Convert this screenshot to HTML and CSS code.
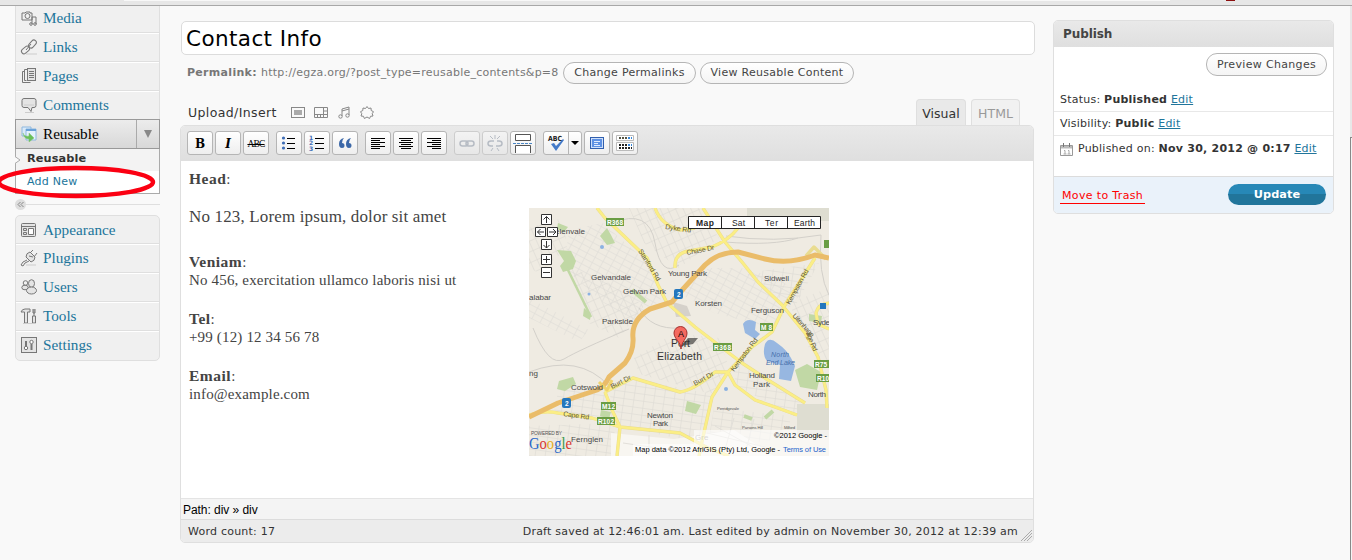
FILE: index.html
```
<!DOCTYPE html>
<html lang="en">
<head>
<meta charset="utf-8">
<title>Contact Info</title>
<link rel="stylesheet" href="styles.css">
</head>
<body>
<div class="topbar"><span class="topbar-tab"></span><span class="topbar-dot"></span></div>
<div class="page">
  <nav class="sidebar">
    <ul class="menu menu-top">
      <li><svg class="mi" viewBox="0 0 16 16"><path d="M1 3h3l1-1h4v1h2v7H1zM11 7h4v7M11 7v7"/><circle cx="6.500" cy="6" r="2.500"/><circle cx="10" cy="14" r="1.300"/><circle cx="14" cy="14" r="1.300"/></svg><a>Media</a></li>
      <li><svg class="mi" viewBox="0 0 16 16"><path class="soft" d="M5 15h11"/><rect x="7" y="2.500" width="9" height="5" rx="2.500" transform="rotate(-48 11.500 5)"/><rect x="0" y="8.500" width="9" height="5" rx="2.500" transform="rotate(-40 4.500 11)"/><path d="M5 11l5-6"/></svg><a>Links</a></li>
      <li><svg class="mi" viewBox="0 0 16 16"><path d="M4 3.500H1.500v11h8M6 1.500H3.500v11h2"/><rect class="fill" x="6.500" y=".5" width="8" height="12"/><path d="M8 3.500h5M8 5.500h5M8 7.500h5M8 9.500h5"/></svg><a>Pages</a></li>
      <li><svg class="mi" viewBox="0 0 16 16"><path class="soft" d="M4 15.500h9"/><path class="fill" d="M3 1.500h10q2 0 2 2v5q0 2-2 2h-2l-1 4-3-4H3q-2 0-2-2v-5q0-2 2-2z"/><path class="soft" d="M3 8h10"/></svg><a>Comments</a></li>
    </ul>
    <div class="current"><svg class="mi" viewBox="0 0 16 16"><path d="M1 1h9v9H1z" fill="#d9eaf9" stroke="#8fb8df"/><path d="M5 3h10v11H5z" fill="#e4f1fc" stroke="#8fb8df"/><path d="M5 4h10" stroke="#6aa2d9" stroke-width="2"/><path d="M2 7q1 4 6 3V7l5 5-5 4v-3q-5 0-6-6z" fill="#6abf59" stroke="#82c675" stroke-width=".5"/></svg><a>Reusable</a><span class="toggle"><i></i></span></div>
    <div class="submenu"><svg class="notch" viewBox="0 0 6 8"><path d="M0 .5L5 4 0 7.500" fill="#f9f9f9" stroke="#aaa"/></svg><div class="sub-on">Reusable</div><div class="sub-link">Add New</div></div>
    <div class="collapse"><svg viewBox="0 0 11 11"><circle cx="5.500" cy="5.500" r="5.500" fill="#dedede"/><path d="M5.500 3L3 5.500 5.500 8M8.500 3L6 5.500 8.500 8" fill="none" stroke="#888"/></svg><span></span></div>
    <ul class="menu menu-bottom">
      <li><svg class="mi" viewBox="0 0 16 16"><rect class="fill" x=".5" y="1.500" width="14" height="13" rx="1"/><path d="M1 4.500h13M2.500 6.500h3v2h-3zM2.500 10.500h3v2h-3z"/><path d="M7.500 6.500h5v6h-5z" fill="#fff"/></svg><a>Appearance</a></li>
      <li><svg class="mi" viewBox="0 0 16 16"><path class="soft" d="M5 15h10"/><path class="fill" d="M5 7l5 5q4-1 4-5L9 2Q5 3 5 7z" /><path d="M9 3l3-3M13 7l3-4M8 6l4 1M6 10l-4 2-2 3 2 1 2-3 4-2"/></svg><a>Plugins</a></li>
      <li><svg class="mi" viewBox="0 0 16 16"><circle cx="4.500" cy="4" r="2.300"/><ellipse class="fill" cx="4" cy="8.500" rx="3.200" ry="2.300"/><ellipse class="fill" cx="10.500" cy="4.500" rx="3" ry="3.800"/><ellipse class="fill" cx="10.500" cy="11.500" rx="5" ry="3.500"/></svg><a>Users</a></li>
      <li><svg class="mi" viewBox="0 0 16 16"><path class="fill" d="M0 4q1-3 4-3h5v3H6.500v11h-3V4zM13 1v7M11.500 8h3v7h-3z"/><path class="soft" d="M2 15.500h12"/><path d="M12 1v4h2V1"/></svg><a>Tools</a></li>
      <li><svg class="mi" viewBox="0 0 16 16"><rect class="fill" x=".5" y=".5" width="15" height="15"/><path d="M5 4v6M10.500 7v6" stroke-width="2"/><circle cx="5" cy="11" r="1.700" fill="#fff"/><circle cx="10.500" cy="5" r="1.700" fill="#fff"/></svg><a>Settings</a></li>
    </ul>
    <svg class="ring" viewBox="0 0 160 34"><ellipse cx="77" cy="17" rx="77" ry="14" fill="none" stroke="#fb0012" stroke-width="4.500"/></svg>
  </nav>

  <main class="editor">
    <div class="title">Contact Info</div>
    <div class="permalink"><b>Permalink:</b><span class="url">http://egza.org/?post_type=reusable_contents&amp;p=8</span><span class="pill p1">Change Permalinks</span><span class="pill p2">View Reusable Content</span></div>
    <div class="media-row">
      <span class="upload">Upload/Insert</span>
      <svg class="up" viewBox="0 0 14 13"><rect x=".5" y="1.500" width="13" height="10"/><rect x="3" y="4" width="8" height="5" fill="#aaa" stroke="none"/></svg>
      <svg class="up" viewBox="0 0 14 13"><path d="M.5 1.500h13v10H.5zM.5 8.500h13M9.500 1.500v7M9.500 5h4M3.500 8.500v3M6.500 8.500v3M9.500 8.500v3"/></svg>
      <svg class="up" viewBox="0 0 14 13"><path d="M5 10V3l7-2v8M5 5l7-2"/><circle cx="3.500" cy="10.500" r="1.700"/><circle cx="10.500" cy="9.500" r="1.700"/></svg>
      <svg class="up" viewBox="0 0 14 13"><path d="M7 .5l1.500 2 2.500-.5.200 2.500 2.300 1.200-1.300 2 .8 2.300-2.500.3-.9 2.200L7 11l-2.600 1.500-.9-2.200L1 10l.8-2.300-1.300-2 2.300-1.200L3 2l2.500.5z"/></svg>
      <span class="tab tab-on">Visual</span><span class="tab tab-off">HTML</span>
    </div>
    <div class="box">
      <div class="toolbar">
        <span class="tb serif"><b>B</b></span><span class="tb serif"><b><i>I</i></b></span><span class="tb abc"><s>ABC</s></span>
        <span class="gap"></span>
        <span class="tb"><svg viewBox="0 0 20 20"><g fill="#3d6cb5"><circle cx="4.500" cy="5" r="1.600"/><circle cx="4.500" cy="10" r="1.600"/><circle cx="4.500" cy="15" r="1.600"/></g><path d="M8 5.500h8M8 10.500h8M8 15.500h8" stroke="#000"/></svg></span>
        <span class="tb"><svg viewBox="0 0 20 20"><g fill="#3d6cb5" font-family="DejaVu Sans" font-weight="bold" font-size="6"><text x="2" y="6.500">1</text><text x="2" y="12">2</text><text x="2" y="17.500">3</text></g><path d="M8 5.500h9M8 10.500h9M8 15.500h9" stroke="#000"/></svg></span>
        <span class="tb"><svg viewBox="0 0 20 20"><path d="M9 5Q4 6 4 11q0 4 3 4 2.500 0 2.500-2.500T7 10q0-3 2-5zM16 5q-5 1-5 6 0 4 3 4 2.500 0 2.500-2.500T14 10q0-3 2-5z" fill="#3c68a8"/></svg></span>
        <span class="gap"></span>
        <span class="tb"><svg viewBox="0 0 20 20"><path d="M3 5.500h14M3 7.500h9M3 9.500h14M3 11.500h9M3 13.500h14M3 15.500h9" stroke="#000"/></svg></span>
        <span class="tb"><svg viewBox="0 0 20 20"><path d="M3 5.500h14M5 7.500h10M3 9.500h14M5 11.500h10M3 13.500h14M5 15.500h10" stroke="#000"/></svg></span>
        <span class="tb"><svg viewBox="0 0 20 20"><path d="M3 5.500h14M8 7.500h9M3 9.500h14M8 11.500h9M3 13.500h14M8 15.500h9" stroke="#000"/></svg></span>
        <span class="gap"></span>
        <span class="tb dim"><svg viewBox="0 0 20 20"><g fill="none" stroke="#8b96a6" stroke-width="1.500"><rect x="3" y="8" width="8" height="5" rx="2.500"/><rect x="9" y="8" width="8" height="5" rx="2.500"/></g></svg></span>
        <span class="tb dim"><svg viewBox="0 0 20 20"><g fill="none" stroke="#8b96a6" stroke-width="1.500"><path d="M9 8H6q-3 0-3 2.500T6 13h2M12 8h2q3 0 3 2.500T14 13h-3"/><path d="M10 2v4M5 3l3 3M15 3l-3 3M6 18l2-3M14 18l-2-3" stroke-width="1"/></g></svg></span>
        <span class="tb"><svg viewBox="0 0 20 20"><path d="M2.500 1.500v6h15v-6zM2.500 20v-7.500h15V20" fill="#fff" stroke="#555"/><path d="M0 10.500h20" stroke="#4b87c5" stroke-dasharray="3 1"/></svg></span>
        <span class="gap"></span>
        <span class="tb spell"><svg viewBox="0 0 20 20"><path d="M5 11l3-1 2 3 7-7 1 1-8 11z" fill="#457bc9"/><text x="2" y="8" font-family="DejaVu Sans" font-size="7" font-weight="bold" textLength="14" lengthAdjust="spacingAndGlyphs">ABC</text></svg></span><span class="tb arrow"><i></i></span>
        <span class="tb"><svg viewBox="0 0 20 20"><rect x="3.500" y="4.500" width="13" height="11" fill="#cfe0fa" stroke="#315fae"/><rect x="5" y="6" width="10" height="8" fill="#5d91e4"/><path d="M7 8.500h6M7 10.500h4M7 12.500h6" stroke="#dfeaff"/></svg></span>
        <span class="tb"><svg viewBox="0 0 20 20"><path d="M1.500 2.500h17v5h-17zM1.500 9.500h17v8h-17z" fill="#fff" stroke="#bbb"/><path d="M4 5h8" stroke="#554" stroke-width="2" stroke-dasharray="2 1"/><path d="M4 12h8M4 15h13" stroke="#222" stroke-width="2" stroke-dasharray="2 1"/><path d="M13 5h4M13 12h4" stroke="#3787d9" stroke-width="2" stroke-dasharray="2 1"/></svg></span>
      </div>
      <div class="content">
        <div class="copy">
          <p class="h"><b>Head</b>:</p>
          <p class="lead">No 123, Lorem ipsum, dolor sit amet</p>
          <p class="h ven"><b>Veniam</b>:</p><p class="l3">No 456, exercitation ullamco laboris nisi ut</p>
          <p class="h"><b>Tel</b>:</p><p class="l4">+99 (12) 12 34 56 78</p>
          <p class="h"><b>Email</b>:</p><p class="l5">info@example.com</p>
        </div>
        <svg class="map" viewBox="0 0 300 248">
          <defs>
            <pattern id="g1" width="9" height="6" patternUnits="userSpaceOnUse" patternTransform="rotate(28)"><path d="M0 0h9M0 0v6" stroke="#dcdad5" fill="none"/></pattern>
            <pattern id="g2" width="7" height="10" patternUnits="userSpaceOnUse" patternTransform="rotate(-24)"><path d="M0 0h7M0 0v10" stroke="#dad8d2" fill="none"/></pattern>
            <pattern id="g3" width="10" height="7" patternUnits="userSpaceOnUse" patternTransform="rotate(8)"><path d="M0 0h10M0 0v7" stroke="#dad8d2" fill="none"/></pattern>
          </defs>
          <rect width="300" height="248" fill="#efebe2"/>
          <path d="M40 22L74 15 120 56 132 92 105 112 75 95 35 60zM0 90L60 122 50 134 0 110zM212 60L250 70 270 88 244 120 185 105 150 85 180 60z" fill="url(#g1)"/>
          <path d="M42 60L80 75 115 98 90 130 60 115zM145 125L190 130 200 160 182 186 110 166 105 150zM260 95L300 80V160L280 140zM0 20L34 10 38 40 10 65 0 60zM100 0H170L190 30 150 60 115 35z" fill="url(#g2)"/>
          <path d="M30 178L75 182 90 218 25 204zM80 185L104 170 182 186 174 236 92 218zM205 155L245 175 275 197 265 208 206 177zM0 218L85 215 87 248H0zM185 200L262 208 258 230 178 240zM217 65L290 55 265 100z" fill="url(#g3)"/>
          <path d="M82 225L145 231 205 222 245 248H82z" fill="#f8f6f1"/><path d="M178 225l62 15M186 218l45 25M205 210l-10 35M225 211l-9 35M94 235l55 8M120 227v20" stroke="#e2dfd9" fill="none"/>
          <path d="M218 0H300v13h-82zM268 196h32v33h-32z" fill="#deddd1"/>
          <path d="M144 94l14 4 4 10-15 1z" fill="#d5d1ca"/>
          <path d="M28 42l14 1 5 10-3 8-10 3-3-6 4-5zM71 28l7-8 4 7 4 8-8 2zM55 100l7 6-1 6-7-4zM30 173l14-4 3 7-11 7-8-2zM158 193l14 4-5 9-11-3zM266 162l12-6 14 8-4 18-17-3zM280 106l13 2-1 7-12-2zM29 15l10 4-4 5-7-3zM72 202l10 2-2 7-9-3z" fill="#c1d8a5"/>
          <path d="M38 60L62 109" stroke="#c1d8a5" stroke-width="2.500"/><path d="M103 82l14 12M215 208l8 3M236 210l8-7" stroke="#c1d8a5" stroke-width="4" fill="none"/>
          <path d="M236 136q4-8 12-1 10 7 14 15l4 8-4 15-12-2 1-14-13-4q-5-6-2-17zM214 116q4-7 13-2l-1 8 5 4-5 5-10-6z" fill="#97b7e1"/>
          <circle cx="73" cy="39" r="2" fill="#8bb1e2"/><circle cx="60" cy="86" r="1.500" fill="#8bb1e2"/><circle cx="197" cy="181" r="2" fill="#8bb1e2"/>
          <g fill="none" stroke="#d3d0ca" stroke-width="1"><path d="M83 15Q120 0 126 35T150 57M4 120Q20 160 35 151T100 121M0 164Q50 145 80 178M110 100Q122 122 151 120M197 28Q245 35 292 27 289 66 300 87M196 34Q245 38 269 30"/></g>
          <g fill="none" stroke-linejoin="round">
            <path d="M68 0L76 10 96 29 118 50 129 77 138 95 166 119 213 155 239 172 276 195M174 0L196 34 213 54 229 74 253 97 276 125 289 149 297 182 298 200M286 50L256 97 243 124 223 139 199 164 183 189 174 229 170 248M76 184L104 170 151 184Q165 182 186 164L199 164 206 177 226 192 246 199 268 207M76 184L83 202 91 219 88 248M0 207Q15 202 29 205L63 210 91 219 151 225 179 240 200 248M126 0Q132 17 151 22L166 20M146 60Q145 45 160 43L183 39Q200 32 209 20M300 95Q289 96 287 105L289 116 300 121M277 48l8-9 12 12" stroke="#e9dc90" stroke-width="3.400"/>
            <path d="M68 0L76 10 96 29 118 50 129 77 138 95 166 119 213 155 239 172 276 195M174 0L196 34 213 54 229 74 253 97 276 125 289 149 297 182 298 200M286 50L256 97 243 124 223 139 199 164 183 189 174 229 170 248M76 184L104 170 151 184Q165 182 186 164L199 164 206 177 226 192 246 199 268 207M76 184L83 202 91 219 88 248M0 207Q15 202 29 205L63 210 91 219 151 225 179 240 200 248M126 0Q132 17 151 22L166 20M146 60Q145 45 160 43L183 39Q200 32 209 20M300 95Q289 96 287 105L289 116 300 121" stroke="#fbee85" stroke-width="2.500"/>
            <path d="M0 209L29 195 68 182Q76 178 80 169L96 155Q105 143 104 130 102 112 121 101L143 94 155 80 176 57Q189 44 209 44L236 51Q260 57 286 47L300 50" stroke="#eabc69" stroke-width="5"/>
            <path d="M70 174l8 8 5-10" stroke="#efd36d" stroke-width="3"/>
          </g>
          <g class="shield"><rect x="77" y="10" width="18" height="8"/><rect x="184" y="135" width="19" height="8"/><rect x="231" y="115" width="13" height="8"/><rect x="285" y="152" width="15" height="8"/><rect x="287" y="166" width="13" height="8"/><rect x="72" y="194" width="15" height="8"/><rect x="68" y="209" width="18" height="8"/><rect x="295" y="32" width="5" height="8"/></g>
          <g fill="#2477bd"><rect x="145" y="81" width="9" height="10" rx="2"/><rect x="33" y="190" width="9" height="10" rx="2"/><rect x="291" y="95" width="6" height="6"/></g>
          <g class="st"><text x="78" y="17" textLength="16">R368</text><text x="185" y="142" textLength="17">R368</text><text x="232" y="122" textLength="11">M8</text><text x="286" y="159" textLength="12">R75</text><text x="288" y="173" textLength="12">R10</text><text x="73" y="201" textLength="13">M12</text><text x="69" y="216" textLength="16">R102</text><text x="148" y="89">2</text><text x="36" y="198">2</text></g>
          <g class="ml"><text x="26" y="26" textLength="30">elenvale</text><text x="62" y="72" textLength="40">Gelvandale</text><text x="94" y="86" textLength="43">Gelvan Park</text><text x="139" y="68" textLength="39">Young Park</text><text x="166" y="98" textLength="27">Korsten</text><text x="0" y="92" textLength="22">alabar</text><text x="73" y="116" textLength="31">Parkside</text><text x="235" y="73" textLength="25">Sidwell</text><text x="222" y="105" textLength="33">Ferguson</text><text x="284" y="117" textLength="17">Syde</text><text x="0" y="168">ng</text><text x="42" y="182" textLength="32">Cotswold</text><text x="118" y="210" textLength="26">Newton</text><text x="124" y="218" textLength="15">Park</text><text x="42" y="234" textLength="32">Fernglen</text><text x="220" y="170" textLength="26">Holland</text><text x="224" y="179" textLength="17">Park</text><text x="279" y="189" textLength="18">North</text><text x="166" y="232" opacity=".5">Gre</text></g>
          <g class="road"><text transform="translate(109 43) rotate(58)" textLength="36">Stanford Rd</text><text x="136" y="21" transform="rotate(8 136 21)" textLength="26">Dyke Rd</text><text x="158" y="47" transform="rotate(-11 158 47)" textLength="28">Chase Dr</text><text transform="translate(261 97) rotate(-61)" textLength="39">Kempston Rd</text><text transform="translate(263 108) rotate(48)" textLength="29">Uitenhage</text><text transform="translate(205 164) rotate(-53)" textLength="40">Kempston Rd</text><text transform="translate(277 125) rotate(68)" textLength="20">age Rd</text><text transform="translate(83 181) rotate(-27)" textLength="22">Burt Dr</text><text transform="translate(166 178) rotate(-29)" textLength="22">Burt Dr</text><text transform="translate(34 208) rotate(8)" textLength="26">Cape Rd</text></g>
          <g class="lake"><text x="242" y="149" textLength="18">North</text><text x="237" y="157" textLength="29">End Lake</text></g>
          <g class="tiny"><text x="188" y="202" textLength="22">Perridgevale</text><text x="213" y="221" textLength="21">Parsons Hill</text><text x="255" y="221" textLength="11">Milford</text></g>
          <path d="M152 138l7-8 10 0-5 6z" opacity=".5"/>
          <g class="city"><text x="142" y="139" textLength="19">Port</text><text x="128" y="152" textLength="45">Elizabeth</text></g>
          <path d="M152 141c0-7-7-10-7-16a6.500 6.500 0 0 1 13 0c0 6-6 9-6 16z" fill="#f4695f" stroke="#a6302d"/><text x="149" y="129" class="pin">A</text>
          <g class="ctrl"><path d="M12.500 6.500h10v10h-10zM6.500 19.500h10v9h-10zM18.500 19.500h10v9h-10zM12.500 31.500h10v10h-10zM12.500 46.500h10v10h-10zM12.500 59.500h10v10h-10z"/><path d="M17.500 15V8.500m-3 3l3-3 3 3M15 24H8.500m3-3l-3 3 3 3M20 24h7m-3-3l3 3-3 3M17.500 33v7m-3-3l3 3 3-3M14 51.500h7M17.500 48v7M14 64.500h7"/></g>
          <g class="types"><path d="M159.500 8.500h132v12h-132zM192.500 8.500v12M225.500 8.500v12M258.500 8.500v12"/><text x="167" y="18" textLength="18" font-weight="bold">Map</text><text x="203" y="18" textLength="13">Sat</text><text x="236" y="18" textLength="13">Ter</text><text x="265" y="18" textLength="21">Earth</text></g>
          <path d="M165 222H300v14H165zM104 236H300v12H104z" fill="#fff" opacity=".6"/>
          <g class="credit"><text x="245" y="230" textLength="53">©2012 Google -</text><text x="106" y="244" textLength="145">Map data ©2012 AfriGIS (Pty) Ltd, Google -</text><text x="254" y="244" textLength="43" fill="#2463cb">Terms of Use</text><text x="2" y="227" textLength="31" class="pow">POWERED BY</text></g>
          <text x="0" y="241" class="logo" textLength="43" lengthAdjust="spacingAndGlyphs"><tspan fill="#2867c9">G</tspan><tspan fill="#d93530">o</tspan><tspan fill="#e5ad24">o</tspan><tspan fill="#2867c9">g</tspan><tspan fill="#38994a">l</tspan><tspan fill="#d93530">e</tspan></text>
        </svg>
      </div>
      <div class="path"><span>Path: div » div</span></div>
      <div class="status"><span class="words">Word count: 17</span><span class="saved">Draft saved at 12:46:01 am. Last edited by admin on November 30, 2012 at 12:39 am</span><svg class="grip" viewBox="0 0 12 12"><path d="M1 12L12 1M4 12l8-8M7 12l5-5" stroke="#aaa"/></svg></div>
    </div>
  </main>

  <aside class="publish">
    <h2><span>Publish</span></h2>
    <div class="preview"><span class="pill p3">Preview Changes</span></div>
    <div class="prow"><span class="r1">Status: <b>Published</b> <a>Edit</a></span></div>
    <div class="prow"><span class="r2">Visibility: <b>Public</b> <a>Edit</a></span></div>
    <div class="prow last"><svg viewBox="0 0 13 13"><path d="M.5 2.500h12v10H.5z" fill="#fff" stroke="#999"/><path d="M1 3h11v2.500H1z" fill="#bbb"/><path d="M3.500 0v4M9.500 0v4" stroke="#777"/><path d="M4 7.500h1v3.500M3.500 11h3M8 7.500h1v3.500M7.500 11h3" fill="none" stroke="#aaa"/></svg><span class="r3">Published on: <b>Nov 30, 2012 @ 0:17</b> <a>Edit</a></span></div>
    <div class="actions"><span class="trash">Move to Trash</span><span class="update">Update</span></div>
  </aside>
  <div class="scroll"><span></span></div>
</div>
</body>
</html>
```
FILE: styles.css
```
* { box-sizing: border-box; }
body { margin: 0; width: 1352px; height: 560px; overflow: hidden; background: #f9f9f9; color: #333; font-family: "DejaVu Sans", sans-serif; font-size: 11px; letter-spacing: .23px; }
p, ul, h2 { margin: 0; padding: 0; list-style: none; }
span, a { white-space: nowrap; }
svg { letter-spacing: 0; }
.topbar { height: 6px; background: #e7e7e7; border-bottom: 1px solid #a8a8a8; display: flex; }
.topbar-tab { width: 1046px; height: 1px; margin-left: 124px; background: #f8f8f8; }
.topbar-dot { width: 9px; height: 1px; margin-left: 56px; background: #8c1010; }
.page { display: flex; height: 554px; }
.sidebar { position: relative; width: 145px; margin-left: 15px; font-family: "Liberation Serif", serif; font-size: 15.2px; letter-spacing: 0; }
.menu { border: 1px solid #dfdfdf; background: #f0f0f0; }
.menu li { height: 29px; display: flex; align-items: center; border-top: 1px solid #fff; border-bottom: 1px solid #dfdfdf; color: #21759b; padding-bottom: 2px; }
.menu-top { border-top: 0; border-bottom: 0; height: 113px; }
.menu-top li:first-child { height: 27px; border-top: 0; }
.menu-top li:last-child { border-bottom: 0; height: 28px; }
.menu-bottom { border-radius: 5px; height: 146px; }
.menu-bottom li:first-child { border-top-color: transparent; height: 28px; padding-bottom: 0; }
.menu-bottom li:last-child { border-bottom: 0; }
.mi { width: 16px; height: 16px; margin: 0 6px 0 5px; flex: none; overflow: visible; fill: none; stroke: #777; }
.mi .fill { fill: #e4e4e4; }
.mi .soft { stroke: #ccc; }
.current { height: 30px; border: 1px solid #999; background: linear-gradient(#ececec, #d8d8d8); display: flex; align-items: center; color: #000; }
.toggle { margin-left: auto; width: 23px; height: 28px; border-left: 1px solid #aaa; display: flex; align-items: center; justify-content: center; }
.toggle i { border: 4.5px solid transparent; border-top: 8px solid #888; border-bottom: 0; }
.submenu { position: relative; height: 45px; border: 1px solid #aaa; border-top: 0; background: #fff; font-family: "DejaVu Sans", sans-serif; font-size: 11px; letter-spacing: .25px; }
.sub-on, .sub-link { height: 22px; line-height: 21px; padding-left: 11px; }
.sub-on { font-weight: bold; background: #f3f3f3; font-size: 11.3px; line-height: 20px; letter-spacing: .1px; }
.sub-link { color: #21759b; }
.notch { position: absolute; left: -1px; top: 7px; width: 6px; height: 8px; }
.collapse { display: flex; align-items: center; height: 21px; }
.collapse svg { width: 11px; height: 11px; }
.collapse span { height: 1px; flex: 1; background: #dfdfdf; }
.ring { position: absolute; left: -16px; top: 159px; width: 160px; height: 34px; overflow: visible; }
.editor { width: 855px; margin-left: 20px; padding-top: 15px; }
.title { height: 34px; margin-left: 1px; border: 1px solid #dcdcdc; border-radius: 5px; background: #fff; color: #000; font-size: 21.5px; line-height: 34px; padding-left: 4px; letter-spacing: .4px; }
.permalink { display: flex; align-items: center; height: 35px; padding-left: 7px; color: #777; }
.permalink b { width: 70px; letter-spacing: .3px; }
.url { margin-left: 4px; width: 302px; }
.pill { height: 22px; line-height: 19px; border: 1px solid #b5b5b5; border-radius: 11px; background: linear-gradient(#fff, #f4f4f4); color: #444; text-align: center; flex: none; letter-spacing: .28px; }
.p1 { width: 133px; margin-right: 4px; } .p2 { width: 154px; }
.media-row { height: 35px; padding: 10px 15px 0 8px; display: flex; align-items: center; }
.upload { font-size: 12.5px; width: 103px; letter-spacing: .38px; }
.up { width: 14px; height: 13px; margin-right: 9px; fill: none; stroke: #888; flex: none; }
.tab { align-self: flex-end; height: 26px; line-height: 28px; border: 1px solid #dfdfdf; border-bottom: 0; border-radius: 4px 4px 0 0; background: #f1f1f1; text-align: center; font-size: 12.5px; letter-spacing: 0; }
.tab-on { margin-left: auto; width: 50px; background: #e9e9e9; }
.tab-off { width: 49px; margin-left: 5px; color: #999; }
.box { width: 854px; height: 418px; border: 1px solid #dfdfdf; border-radius: 5px; overflow: hidden; background: #fff; }
.toolbar { height: 35px; background: linear-gradient(#e9e9e9, #dfdfdf); border-bottom: 1px solid #dfdfdf; padding: 5px 6px; display: flex; gap: 2px; letter-spacing: 0; }
.tb { width: 26px; height: 24px; border: 1px solid #b5b5b5; border-radius: 3px; background: linear-gradient(#fff, #eee); display: flex; align-items: center; justify-content: center; flex: none; color: #000; }
.tb svg { width: 20px; height: 20px; fill: none; }
.tb text { fill: inherit; }
.spell text { fill: #222; }
.serif { font: 12px "DejaVu Serif", serif; padding-top: 1px; }
.abc { font: 9.5px "Liberation Serif", serif; letter-spacing: -.8px; padding-top: 1px; }
.gap { width: 3px; }
.dim { opacity: .5; }
.spell { border-radius: 3px 0 0 3px; margin-right: -3px; }
.arrow { width: 14px; border-radius: 0 3px 3px 0; }
.arrow i { border: 4px solid transparent; border-top-color: #000; border-bottom: 0; }
.content { height: 337px; display: flex; color: #444; font-family: "Liberation Serif", serif; }
.copy { width: 340px; margin-left: 8px; padding-top: 8px; font-size: 15px; letter-spacing: .16px; }
.copy p { height: 19px; line-height: 19px; white-space: nowrap; }
.copy b { font-size: 15.5px; letter-spacing: .5px; }
.copy .lead { font-size: 17px; margin: 19px 0 26px; letter-spacing: .15px; }
.copy p + .h { margin-top: 19px; }
.map { width: 300px; height: 248px; margin-top: 47px; overflow: hidden; }
.map text { font-family: "Liberation Sans", sans-serif; }
.map .shield { fill: #6a9d43; }
.st text { fill: #fff; font-size: 6.5px; font-weight: bold; }
.ml text { fill: #484848; font-size: 8px; }
.road text { fill: #625b34; font-size: 7px; }
.lake text { fill: #4770ac; font-size: 7px; font-style: italic; }
.tiny text { fill: #555; font-size: 4.2px; }
.city text { fill: #333; font-size: 10.5px; }
.map .pin { font-size: 9px; }
.ctrl { fill: #fff; stroke: #333; }
.ctrl path + path { fill: none; }
.types path { fill: #fff; stroke: #222; }
.types text { fill: #222; font-size: 8.5px; }
.credit text { font-size: 7.5px; }
.credit .pow { font-size: 4.8px; fill: #555; }
.map .logo { font: 17px "Liberation Serif", serif; stroke-width: .3px; }
.path { height: 21px; border-top: 1px solid #e4e4e4; background: #f4f4f4; color: #000; font: 12px/23px "Liberation Sans", sans-serif; padding-left: 2px; letter-spacing: -.05px; }
.status { position: relative; height: 23px; border-top: 1px solid #dcdcdc; background: #ececec; display: flex; justify-content: space-between; line-height: 23px; padding: 0 15px 0 7px; }
.grip { position: absolute; right: 1px; bottom: 1px; width: 12px; height: 12px; }
.publish { width: 281px; height: 194px; margin: 14px 0 0 18px; border: 1px solid #dfdfdf; border-radius: 5px; overflow: hidden; background: #fff; }
.publish h2 { height: 26px; line-height: 27px; font-size: 12px; padding-left: 9px; background: linear-gradient(#e9e9e9, #dfdfdf); color: #444; letter-spacing: -.1px; }
.preview { height: 41px; padding: 6px 6px 0 0; display: flex; justify-content: flex-end; }
.p3 { width: 121px; height: 23px; line-height: 22px; letter-spacing: .33px; }
.prow { height: 24px; line-height: 24px; padding: 1px 0 0 6px; border-bottom: 1px solid #e8e8e8; display: flex; align-items: center; }
.prow a { color: #21759b; text-decoration: underline; }
.prow svg { width: 13px; height: 13px; margin-right: 5px; }
.last { height: 40px; border: 0; padding-bottom: 15px; }
.actions { height: 38px; border-top: 1px solid #dcdcdc; background: #eaf2fa; display: flex; align-items: center; justify-content: space-between; padding: 0 7px 2px 6px; }
.trash { color: #f00; border-bottom: 1px solid #f00; line-height: 14px; width: 85px; padding-left: 2px; margin-top: 3px; letter-spacing: .35px; }
.update { width: 98px; height: 21px; line-height: 21px; text-align: center; border-radius: 11px; color: #fff; font-weight: bold; font-size: 11.3px; letter-spacing: .1px; background: linear-gradient(#2788b7 50%, #21759b 50%); margin-top: -1px; }
.scroll { margin-left: auto; width: 2px; background: #e8e8e8; padding-top: 131px; }
.scroll span { display: block; height: 423px; border-left: 1px solid #888; border-top: 1px solid #888; background: #f4f4f4; }
```
